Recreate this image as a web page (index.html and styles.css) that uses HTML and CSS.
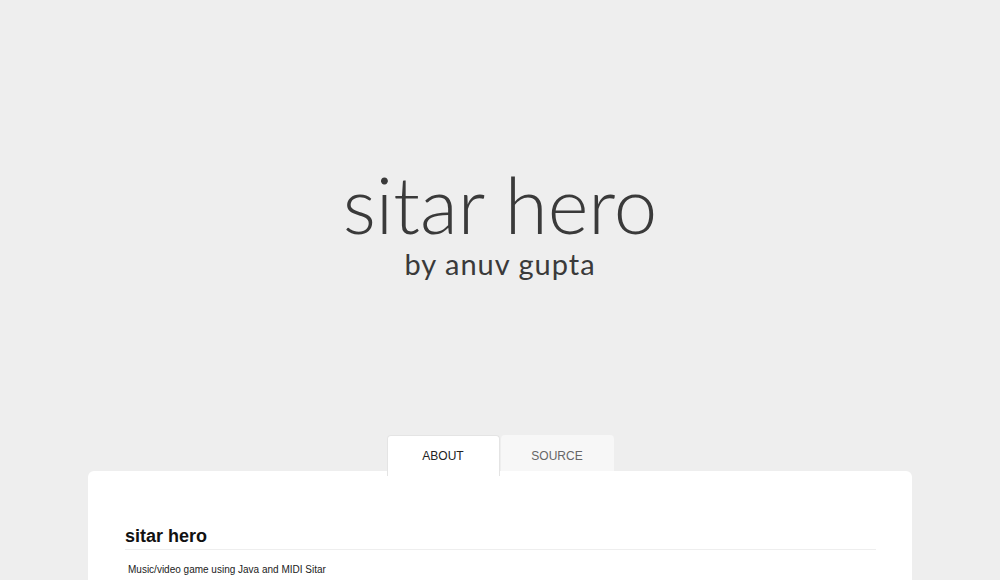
FILE: index.html
```html
<!DOCTYPE html>
<html>
<head>
<meta charset="utf-8">
<link rel="stylesheet" href="styles.css">
</head>
<body>
<header class="hero">
  <h1 class="title">sitar hero</h1>
  <p class="subtitle">by anuv gupta</p>
</header>
<nav class="tabs">
  <div class="tab active">ABOUT</div>
  <div class="tab">SOURCE</div>
</nav>
<main class="card">
  <h2 class="card-title">sitar hero</h2>
  <p class="card-text">Music/video game using Java and MIDI Sitar</p>
</main>
</body>
</html>
```
FILE: styles.css
```css
html, body {
  margin: 0;
  padding: 0;
  background: #eeeeee;
  height: 580px;
  overflow: hidden;
}
.hero {
  height: 435px;
  display: flex;
  flex-direction: column;
  align-items: center;
  justify-content: flex-start;
  padding-top: 162px;
  box-sizing: border-box;
}
.title {
  margin: 0;
  font-family: "Lato", "DejaVu Sans", sans-serif;
  font-weight: 300;
  font-size: 78px;
  line-height: 84px;
  color: #3a3a3a;
  letter-spacing: 0;
}
.subtitle {
  margin: 3px 0 0;
  font-family: "Lato", "DejaVu Sans", sans-serif;
  font-weight: 400;
  font-size: 29px;
  line-height: 29px;
  color: #3a3a3a;
  letter-spacing: 1px;
}
.tabs {
  display: flex;
  justify-content: center;
  gap: 1px;
  height: 36px;
}
.tab {
  width: 113px;
  height: 36px;
  display: flex;
  align-items: center;
  justify-content: center;
  font-family: "Liberation Sans", Arial, sans-serif;
  font-size: 12px;
  color: #666;
  background: #f7f7f7;
  border-radius: 4px 4px 0 0;
  box-sizing: border-box;
  padding-top: 6px;
}
.tab.active {
  background: #ffffff;
  color: #222;
  height: 41px;
  align-items: flex-start;
  padding-top: 13px;
  border: 1px solid #e4e4e4;
  border-bottom: none;
  position: relative;
  z-index: 1;
}
.card {
  margin: 0 88px;
  background: #ffffff;
  border-radius: 6px 6px 0 0;
  padding: 54px 36px 0 37px;
  height: 109px;
  box-sizing: border-box;
  overflow: hidden;
}
.card-title {
  margin: 0;
  font-family: "Liberation Sans", Arial, sans-serif;
  font-weight: bold;
  font-size: 18px;
  line-height: 22px;
  color: #111;
  padding-bottom: 2px;
  border-bottom: 1px solid #eeeeee;
}
.card-text {
  margin: 14px 0 0 3px;
  font-family: "Liberation Sans", Arial, sans-serif;
  font-size: 10px;
  color: #222;
}
```
